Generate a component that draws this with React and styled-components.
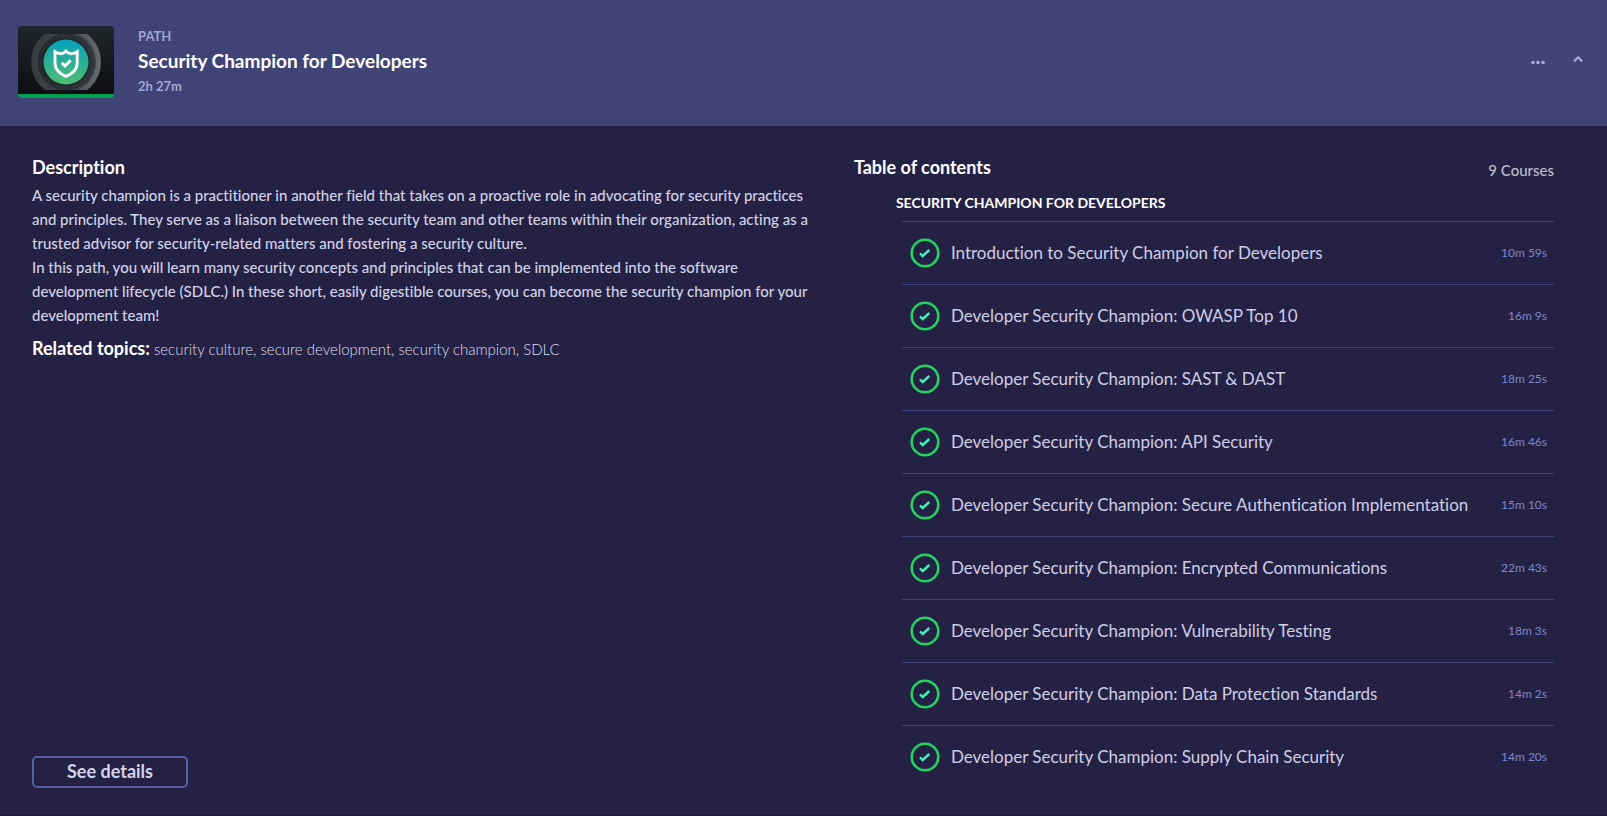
import React from 'react';
import styled, { createGlobalStyle } from 'styled-components';

const GlobalStyle = createGlobalStyle`
  *, *::before, *::after { box-sizing: border-box; }
  body {
    margin: 0;
    background: #252145;
    color: #d2d2e8;
    font-family: Lato, "Liberation Sans", sans-serif;
    font-variant-ligatures: none;
  }
  h2, h3, h4, p, ul, ol { margin: 0; padding: 0; }
`;

const Panel = styled.article`
  display: flex;
  flex-direction: column;
  min-height: 100vh;
  border-bottom: 1px solid #1d1936;
`;

const Header = styled.header`
  display: flex;
  align-items: flex-start;
  padding: 26px 17px 28px 18px;
  background: #404376;
`;

const Thumbnail = styled.div`
  width: 96px;
  height: 72px;
  flex: none;
  overflow: hidden;
  border-radius: 4px;
  border-bottom: 4px solid #00a052;
  background: linear-gradient(#1f272c, #0d0e11);
  svg { display: block; }
`;

const PathInfo = styled.div`
  flex: 1;
  margin-left: 24px;
`;

const Meta = styled.p`
  font-size: 13px;
  line-height: 20px;
  font-weight: 700;
  color: #a3a6d2;
`;

const PathTitle = styled.h2`
  font-size: 19px;
  line-height: 24px;
  margin: 3px 0;
  font-weight: 700;
  a { color: #fff; text-decoration: none; }
`;

const Actions = styled.div`
  display: flex;
  margin-top: 24px;
  gap: 16px;
`;

const IconButton = styled.button`
  width: 24px;
  height: 24px;
  padding: 0;
  border: 0;
  background: none;
  color: #a9acd8;
  cursor: pointer;
  svg { display: block; }
`;

const Body = styled.div`
  flex: 1;
  display: flex;
  justify-content: space-between;
  padding: 29px 53px 27px 32px;
`;

const DescriptionColumn = styled.section`
  width: 52%;
  display: flex;
  flex-direction: column;
  align-items: flex-start;
`;

const ContentsColumn = styled.section`
  width: 46%;
`;

const Heading = styled.h3`
  font-size: 18px;
  line-height: 24px;
  font-weight: 700;
  color: #fff;
`;

const Description = styled.div`
  margin-top: 4px;
  font-size: 15px;
  line-height: 24px;
  font-weight: 500;
`;

const Topics = styled.div`
  display: flex;
  align-items: baseline;
  gap: 4px;
  margin-top: 9px;
  p {
    font-size: 15px;
    line-height: 24px;
    font-weight: 300;
    color: #dedef2;
  }
`;

const DetailsButton = styled.button`
  width: 156px;
  height: 32px;
  margin-top: auto;
  padding: 0 0 2px;
  border: 2px solid #5660a6;
  border-radius: 5px;
  background: none;
  color: #d3d3ea;
  font: 700 18px/24px Lato, "Liberation Sans", sans-serif;
  cursor: pointer;
`;

const ContentsHeader = styled.div`
  display: flex;
  justify-content: space-between;
`;

const CourseCount = styled.span`
  padding-top: 3px;
  font-size: 15px;
  line-height: 24px;
  font-weight: 500;
  color: #bdbdc9;
`;

const SectionTitle = styled.h4`
  margin: 11px 0 8px 42px;
  font-size: 14px;
  line-height: 20px;
  font-weight: 700;
  color: #fff;
  text-transform: uppercase;
`;

const CourseList = styled.ol`
  margin-left: 48px;
  list-style: none;
`;

const Course = styled.li`
  display: flex;
  align-items: center;
  height: 63px;
  padding: 0 7px 0 8px;
  border-top: 1px solid #40437a;
  svg { flex: none; }
`;

const CourseLink = styled.a`
  flex: 1;
  margin-left: 11px;
  font-size: 17px;
  line-height: 24px;
  color: #cecee6;
  text-decoration: none;
`;

const Duration = styled.span`
  font-size: 12px;
  line-height: 20px;
  color: #8086c8;
`;

const courses = [
  ['Introduction to Security Champion for Developers', '10m 59s'],
  ['Developer Security Champion: OWASP Top 10', '16m 9s'],
  ['Developer Security Champion: SAST & DAST', '18m 25s'],
  ['Developer Security Champion: API Security', '16m 46s'],
  ['Developer Security Champion: Secure Authentication Implementation', '15m 10s'],
  ['Developer Security Champion: Encrypted Communications', '22m 43s'],
  ['Developer Security Champion: Vulnerability Testing', '18m 3s'],
  ['Developer Security Champion: Data Protection Standards', '14m 2s'],
  ['Developer Security Champion: Supply Chain Security', '14m 20s'],
];

function ShieldArtwork() {
  return (
    <svg width="96" height="68" viewBox="0 0 96 68" aria-hidden="true">
      <defs>
        <linearGradient id="ring" x1="0" x2="1" y1="0" y2="0">
          <stop offset="0" stopColor="#343a40" />
          <stop offset="0.5" stopColor="#42474d" />
          <stop offset="1" stopColor="#666a70" />
        </linearGradient>
        <linearGradient id="inner" x1="0" x2="1" y1="0" y2="0">
          <stop offset="0" stopColor="#262b30" />
          <stop offset="1" stopColor="#30363c" />
        </linearGradient>
        <linearGradient id="disc" x1="0" x2="0" y1="0" y2="1">
          <stop offset="0" stopColor="#06a0bb" />
          <stop offset="1" stopColor="#4fbd70" />
        </linearGradient>
        <clipPath id="band"><rect x="0" y="8" width="96" height="56" /></clipPath>
      </defs>
      <g clipPath="url(#band)">
        <circle cx="48" cy="36" r="35" fill="url(#ring)" />
        <circle cx="48" cy="36" r="30" fill="#3b4046" />
        <circle cx="48" cy="36" r="28.5" fill="url(#inner)" />
        <circle cx="48" cy="36" r="24" fill="#20252a" />
      </g>
      <circle cx="48" cy="36" r="22.5" fill="url(#disc)" />
      <path
        d="M48 25.2c-1.500 1.900-3 2.500-5 2.500-2 0-4-.5-6-1.900v11.200c0 6 4 10.500 11 13.400 7-2.900 11.200-7.400 11.200-13.400v-11.200c-2 1.400-4.200 1.900-6.200 1.900s-3.500-.6-5-2.500z"
        fill="none" stroke="#fff" strokeWidth="2.900" strokeLinejoin="miter"
      />
      <path d="M43.800 36.800l3.200 3.200 5.600-5.600" fill="none" stroke="#fff" strokeWidth="2.900" />
    </svg>
  );
}

function CompletedIcon() {
  return (
    <svg width="30" height="30" viewBox="0 0 30 30" role="img" aria-label="Completed">
      <circle cx="15" cy="15" r="13.300" fill="none" stroke="#22d35e" strokeWidth="2.600" />
      <path d="M10 15.300l2.700 2.700 6.600-6" fill="none" stroke="#3df2b4" strokeWidth="2.400" />
    </svg>
  );
}

export default function App() {
  return (
    <>
      <GlobalStyle />
      <Panel>
        <Header>
          <Thumbnail><ShieldArtwork /></Thumbnail>
          <PathInfo>
            <Meta>PATH</Meta>
            <PathTitle><a href="#path">Security Champion for Developers</a></PathTitle>
            <Meta>2h 27m</Meta>
          </PathInfo>
          <Actions>
            <IconButton type="button" aria-label="More options">
              <svg width="24" height="24" viewBox="0 0 24 24" fill="currentColor">
                <circle cx="7" cy="12.500" r="1.800" />
                <circle cx="12" cy="12.500" r="1.800" />
                <circle cx="17" cy="12.500" r="1.800" />
              </svg>
            </IconButton>
            <IconButton type="button" aria-label="Collapse" aria-expanded="true">
              <svg width="24" height="24" viewBox="0 0 24 24" fill="none" stroke="currentColor" strokeWidth="2.200">
                <path d="M8 11.400l4.100-4.200 4.100 4.200" />
              </svg>
            </IconButton>
          </Actions>
        </Header>
        <Body>
          <DescriptionColumn>
            <Heading>Description</Heading>
            <Description>
              <p>
                A security champion is a practitioner in another field that takes on a proactive role in
                advocating for security practices and principles. They serve as a liaison between the
                security team and other teams within their organization, acting as a trusted advisor for
                security-related matters and fostering a security culture.
              </p>
              <p>
                In this path, you will learn many security concepts and principles that can be implemented
                into the software development lifecycle (SDLC.) In these short, easily digestible courses,
                you can become the security champion for your development team!
              </p>
            </Description>
            <Topics>
              <Heading>Related topics:</Heading>
              <p>security culture, secure development, security champion, SDLC</p>
            </Topics>
            <DetailsButton type="button">See details</DetailsButton>
          </DescriptionColumn>
          <ContentsColumn>
            <ContentsHeader>
              <Heading>Table of contents</Heading>
              <CourseCount>9 Courses</CourseCount>
            </ContentsHeader>
            <SectionTitle>Security Champion for Developers</SectionTitle>
            <CourseList>
              {courses.map(([name, time]) => (
                <Course key={name}>
                  <CompletedIcon />
                  <CourseLink href="#course">{name}</CourseLink>
                  <Duration>{time}</Duration>
                </Course>
              ))}
            </CourseList>
          </ContentsColumn>
        </Body>
      </Panel>
    </>
  );
}
